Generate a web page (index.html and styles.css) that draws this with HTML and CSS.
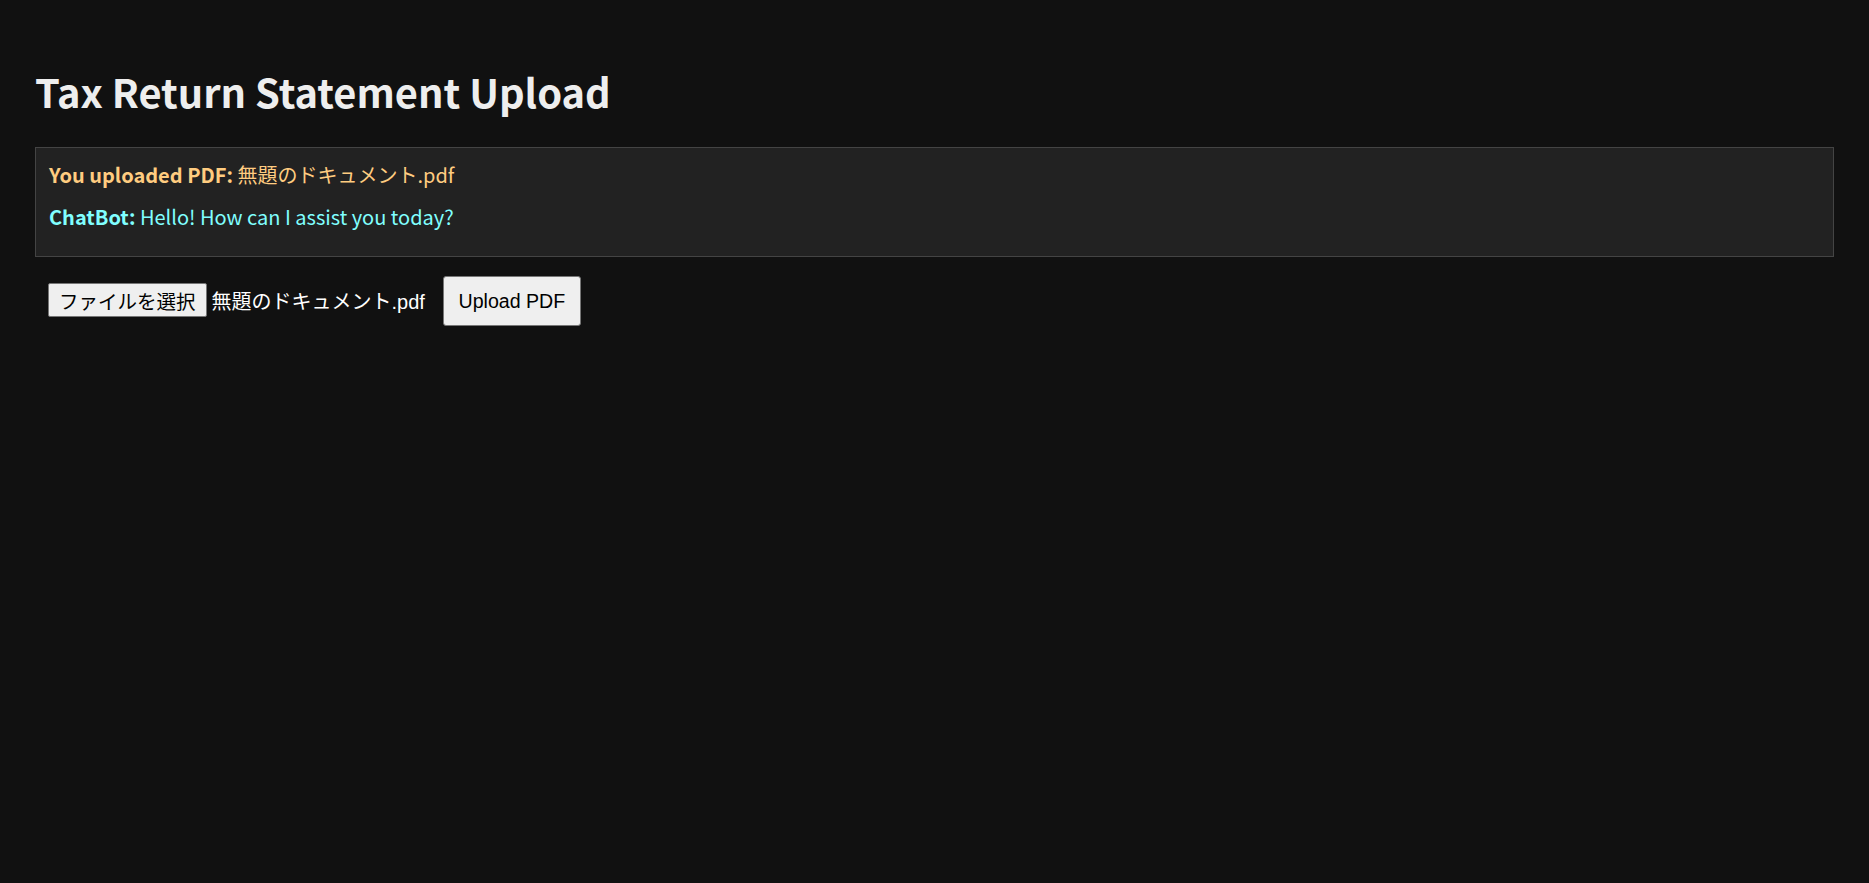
FILE: index.html
```html
<!DOCTYPE html>
<html lang="ja">
<head>
<meta charset="utf-8">
<title>Tax Return Statement Upload</title>
<link rel="stylesheet" href="styles.css">
</head>
<body>
<main class="page">
  <h1 class="title">Tax Return Statement Upload</h1>
  <section class="chat-box">
    <p class="msg msg-user"><strong>You uploaded PDF:</strong> 無題のドキュメント.pdf</p>
    <p class="msg msg-bot"><strong>ChatBot:</strong> Hello! How can I assist you today?</p>
  </section>
  <form class="upload-row">
    <label class="file-input">
      <span class="file-btn">ファイルを選択</span>
      <span class="file-name">無題のドキュメント.pdf</span>
    </label>
    <button type="button" class="upload-btn">Upload PDF</button>
  </form>
</main>
</body>
</html>
```

FILE: styles.css
```css
html, body {
  margin: 0;
  padding: 0;
  background: #111111;
}

body {
  font-family: "Noto Sans CJK JP", "Noto Sans", sans-serif;
  color: #eeeeee;
}

.page {
  padding: 62px 35px 0;
}

.title {
  margin: 0 0 28px;
  font-size: 39.8px;
  font-weight: 700;
  line-height: normal;
  color: #eeeeee;
}

.chat-box {
  background: #222222;
  border: 1px solid #444444;
  padding: 12px 13px 25px;
  display: flex;
  flex-direction: column;
  gap: 13px;
}

.msg {
  margin: 0;
  font-size: 20px;
  line-height: normal;
}

.msg strong {
  font-weight: 700;
}

.msg-user {
  color: #ffcc80;
}

.msg-bot {
  color: #80ffff;
}

.upload-row {
  display: flex;
  align-items: center;
  margin-top: 19px;
  padding-left: 13px;
}

.file-input {
  display: flex;
  align-items: center;
  margin-top: -2px;
}

.file-btn {
  box-sizing: border-box;
  height: 34px;
  display: flex;
  align-items: center;
  padding: 0 10px;
  background: #efefef;
  border: 1px solid #767676;
  border-radius: 2px;
  color: #000000;
  font-family: "Liberation Sans", "Noto Sans CJK JP", sans-serif;
  font-size: 19.5px;
}

.file-name {
  margin-left: 5px;
  color: #ffffff;
  font-family: "Liberation Sans", "Noto Sans CJK JP", sans-serif;
  font-size: 20px;
}

.upload-btn {
  box-sizing: border-box;
  margin-left: 18px;
  height: 50px;
  width: 138px;
  padding: 0;
  background: #efefef;
  border: 1px solid #767676;
  border-radius: 3px;
  color: #000000;
  font-family: "Liberation Sans", Arial, sans-serif;
  font-size: 19.6px;
}
```
